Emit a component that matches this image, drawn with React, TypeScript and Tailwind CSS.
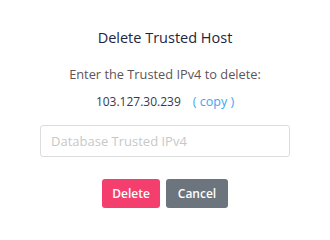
import React from "react";

export default function App() {
  return (
    <div className="w-[330px] h-[240px] bg-white flex flex-col items-center" style={{ fontFamily: '"Open Sans", "Noto Sans", sans-serif' }}>
      <div className="mt-[28px] h-[20px] leading-[20px] text-[14.5px] font-medium text-[#1f2440]">Delete Trusted Host</div>
      <div className="mt-[16px] h-[20px] leading-[20px] text-[12.8px] text-[#5f5458]">Enter the Trusted IPv4 to delete:</div>
      <div className="mt-[8px] h-[20px] leading-[20px] text-[12px] font-medium text-[#3a3a44] flex items-center">
        <span>103.127.30.239</span>
        <span className="ml-[12px] text-[#3aa7f4] text-[12.5px]">( copy )</span>
      </div>
      <input
        className="mt-[13px] w-[250px] h-[32px] border border-[#dcdcdc] rounded-[3px] px-[10px] text-[13px] text-[#333] placeholder:text-[#c8c8c8] outline-none"
        placeholder="Database Trusted IPv4"
      />
      <div className="mt-[22px] flex gap-[6px]">
        <button className="w-[58px] h-[29px] rounded-[3px] bg-[#f43f6e] text-white text-[12px] font-semibold">Delete</button>
        <button className="w-[62px] h-[29px] rounded-[3px] bg-[#6c757d] text-white text-[12px] font-semibold">Cancel</button>
      </div>
    </div>
  );
}
